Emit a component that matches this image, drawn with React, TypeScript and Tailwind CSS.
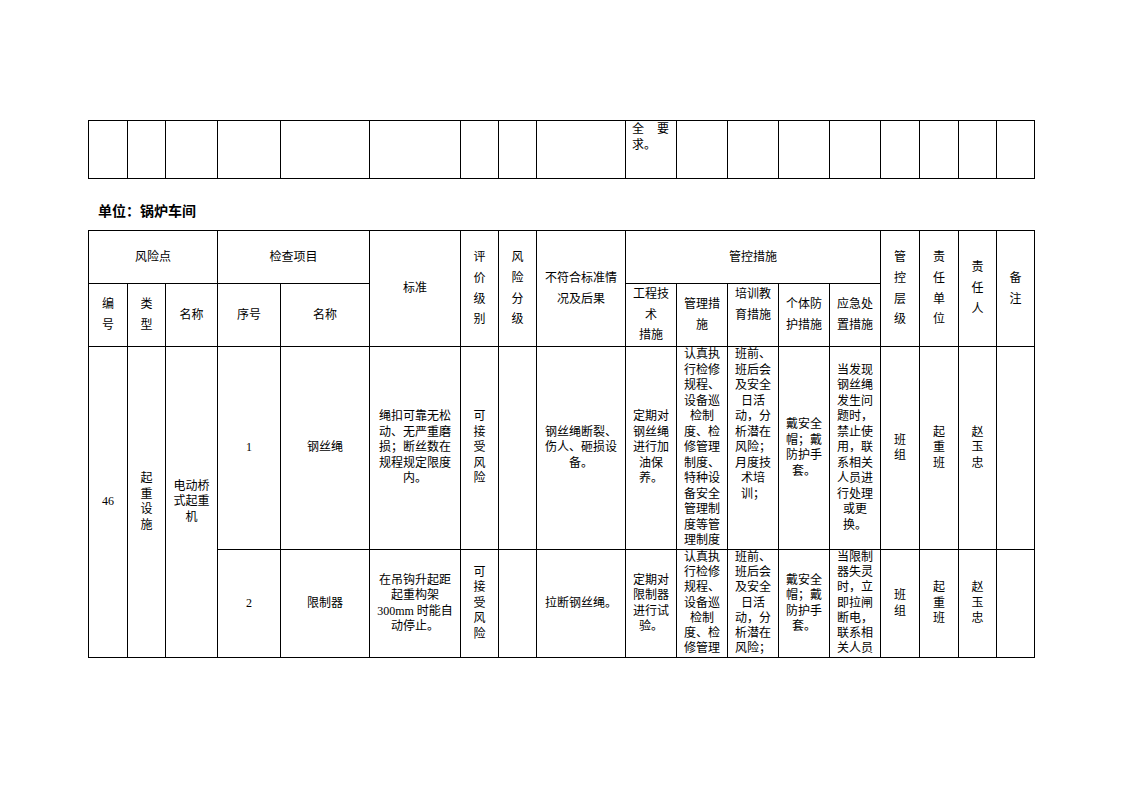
import React from "react";

const COLS =
  "grid-cols-[39px_38px_52px_63px_89px_91px_38px_38px_89px_51px_51px_51px_51px_51px_39px_39px_38px_38px]";

type CellProps = {
  lines?: string[];
  cls?: string;
  top?: boolean;
  head?: boolean;
};

function Cell({ lines = [], cls = "", top = false, head = false }: CellProps) {
  return (
    <div
      className={
        "border-r border-b border-black flex flex-col items-center overflow-hidden " +
        (top ? "justify-start " : "justify-center ") +
        (head ? "leading-[20.7px] " : "leading-[15.5px] ") +
        cls
      }
    >
      {lines.map((l, i) => (
        <div key={i} className="whitespace-nowrap">
          {l}
        </div>
      ))}
    </div>
  );
}

const v = (s: string) => s.split("");

export default function App() {
  return (
    <div
      className="w-[1122px] h-[793px] bg-white text-black pt-[120px] pl-[88px] text-[12px]"
      style={{ fontFamily: '"Liberation Serif", "Noto Sans CJK SC", serif' }}
    >
      {/* top continuation table */}
      <div className={"grid w-fit border-l border-t border-black grid-rows-[58px] " + COLS}>
        {Array.from({ length: 18 }).map((_, i) =>
          i === 9 ? (
            <div key={i} className="border-r border-b border-black pl-[6px] pt-[1px] leading-[15.5px]">
              <div className="w-[37px] flex justify-between">
                <span>全</span>
                <span>要</span>
              </div>
              <div>求。</div>
            </div>
          ) : (
            <div key={i} className="border-r border-b border-black" />
          )
        )}
      </div>

      {/* heading */}
      <div
        className="h-[51px] pt-[21px] pl-[10px] text-[14px] leading-[20px] font-bold"
        style={{ fontFamily: '"Noto Sans CJK SC", sans-serif' }}
      >
        单位：锅炉车间
      </div>

      {/* main table */}
      <div className={"grid w-fit border-l border-t border-black grid-rows-[53px_63px_203px_108px] " + COLS}>
        {/* header row 1 */}
        <Cell head cls="col-span-3" lines={["风险点"]} />
        <Cell head cls="col-span-2" lines={["检查项目"]} />
        <Cell head cls="row-span-2" lines={["标准"]} />
        <Cell head cls="row-span-2" lines={v("评价级别")} />
        <Cell head cls="row-span-2" lines={v("风险分级")} />
        <Cell head cls="row-span-2" lines={["不符合标准情", "况及后果"]} />
        <Cell head cls="col-span-5" lines={["管控措施"]} />
        <Cell head cls="row-span-2" lines={v("管控层级")} />
        <Cell head cls="row-span-2" lines={v("责任单位")} />
        <Cell head cls="row-span-2" lines={v("责任人")} />
        <Cell head cls="row-span-2" lines={v("备注")} />
        {/* header row 2 */}
        <Cell head lines={v("编号")} />
        <Cell head lines={v("类型")} />
        <Cell head lines={["名称"]} />
        <Cell head lines={["序号"]} />
        <Cell head lines={["名称"]} />
        <Cell head lines={["工程技", "术", "措施"]} />
        <Cell head lines={["管理措", "施"]} />
        <Cell head top lines={["培训教", "育措施"]} />
        <Cell head lines={["个体防", "护措施"]} />
        <Cell head lines={["应急处", "置措施"]} />

        {/* body row 1 */}
        <Cell cls="row-span-2" lines={["46"]} />
        <Cell cls="row-span-2" lines={v("起重设施")} />
        <Cell cls="row-span-2" lines={["电动桥", "式起重", "机"]} />
        <Cell lines={["1"]} />
        <Cell lines={["钢丝绳"]} />
        <Cell lines={["绳扣可靠无松", "动、无严重磨", "损；断丝数在", "规程规定限度", "内。"]} />
        <Cell lines={v("可接受风险")} />
        <Cell />
        <Cell lines={["钢丝绳断裂、", "伤人、砸损设", "备。"]} />
        <Cell lines={["定期对", "钢丝绳", "进行加", "油保", "养。"]} />
        <Cell
          top
          lines={[
            "认真执",
            "行检修",
            "规程、",
            "设备巡",
            "检制",
            "度、检",
            "修管理",
            "制度、",
            "特种设",
            "备安全",
            "管理制",
            "度等管",
            "理制度",
          ]}
        />
        <Cell
          top
          lines={["班前、", "班后会", "及安全", "日活", "动，分", "析潜在", "风险；", "月度技", "术培", "训；"]}
        />
        <Cell lines={["戴安全", "帽；戴", "防护手", "套。"]} />
        <Cell
          lines={[
            "当发现",
            "钢丝绳",
            "发生问",
            "题时，",
            "禁止使",
            "用，联",
            "系相关",
            "人员进",
            "行处理",
            "或更",
            "换。",
          ]}
        />
        <Cell lines={v("班组")} />
        <Cell lines={v("起重班")} />
        <Cell lines={v("赵玉忠")} />
        <Cell />

        {/* body row 2 */}
        <Cell lines={["2"]} />
        <Cell lines={["限制器"]} />
        <Cell lines={["在吊钩升起距", "起重构架", "300mm 时能自", "动停止。"]} />
        <Cell lines={v("可接受风险")} />
        <Cell />
        <Cell lines={["拉断钢丝绳。"]} />
        <Cell lines={["定期对", "限制器", "进行试", "验。"]} />
        <Cell
          top
          cls="!leading-[15.2px]"
          lines={["认真执", "行检修", "规程、", "设备巡", "检制", "度、检", "修管理"]}
        />
        <Cell
          top
          cls="!leading-[15.2px]"
          lines={["班前、", "班后会", "及安全", "日活", "动，分", "析潜在", "风险；"]}
        />
        <Cell lines={["戴安全", "帽；戴", "防护手", "套。"]} />
        <Cell
          top
          cls="!leading-[15.2px]"
          lines={["当限制", "器失灵", "时，立", "即拉闸", "断电，", "联系相", "关人员"]}
        />
        <Cell lines={v("班组")} />
        <Cell lines={v("起重班")} />
        <Cell lines={v("赵玉忠")} />
        <Cell />
      </div>
    </div>
  );
}
